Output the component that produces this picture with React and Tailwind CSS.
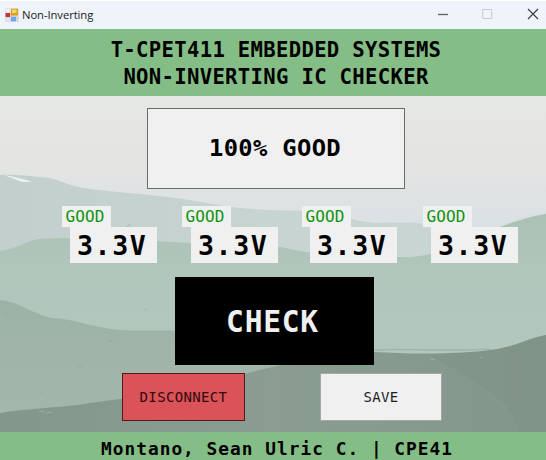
import React from "react";

const MONO = "font-['DejaVu_Sans_Mono',monospace] whitespace-nowrap";

function AppIcon() {
  return (
    <svg width="14" height="14" viewBox="0 0 14 14" className="shrink-0">
      <rect x="0.3" y="0.3" width="13.4" height="13.4" fill="#d3d6dc" />
      <rect x="0.8" y="0.8" width="4.6" height="3.8" fill="#f0f1f4" />
      <rect x="0.5" y="5" width="4.6" height="4" fill="#c9343a" />
      <rect x="1" y="10" width="4" height="3.2" fill="#e2e4e9" />
      <rect x="6" y="8.8" width="5" height="4.5" fill="#6fa3ee" />
      <rect x="6" y="0.8" width="7" height="6.8" rx="0.5" fill="#dca11a" />
      <rect x="7" y="1.6" width="4.5" height="3.4" fill="#fbd65c" />
    </svg>
  );
}

function Landscape() {
  return (
    <svg
      className="absolute inset-0 h-full w-full"
      viewBox="0 96 546 336"
      preserveAspectRatio="none"
    >
      <defs>
        <linearGradient id="sky" x1="0" y1="0" x2="0" y2="1">
          <stop offset="0" stopColor="#e6e8e4" />
          <stop offset="0.2" stopColor="#e4e4e3" />
          <stop offset="0.38" stopColor="#dae1e4" />
        </linearGradient>
        <linearGradient id="far" x1="0" y1="0" x2="1" y2="0">
          <stop offset="0" stopColor="#c2cfcd" />
          <stop offset="0.5" stopColor="#c8d4d2" />
          <stop offset="1" stopColor="#cad6d3" />
        </linearGradient>
        <linearGradient id="mid" gradientUnits="userSpaceOnUse" x1="0" y1="214" x2="0" y2="350">
          <stop offset="0" stopColor="#abc1b4" />
          <stop offset="0.4" stopColor="#b0c6bb" />
          <stop offset="1" stopColor="#b2c8be" />
        </linearGradient>
        <linearGradient id="near" x1="0" y1="0" x2="0" y2="1">
          <stop offset="0" stopColor="#9db2a6" />
          <stop offset="1" stopColor="#a5b7ac" />
        </linearGradient>
        <linearGradient id="front" x1="0" y1="0" x2="1" y2="0">
          <stop offset="0" stopColor="#84978c" />
          <stop offset="0.5" stopColor="#8b9d93" />
          <stop offset="1" stopColor="#83968a" />
        </linearGradient>
      </defs>
      <rect x="0" y="96" width="546" height="336" fill="url(#sky)" />
      <path
        d="M0 175C16 174 36 177 50 178C62 181 72 187 90 189C120 193 150 194 175 198C200 201 220 206 240 208C270 211 290 210 312 211C330 213 345 217 360 221C385 225 405 220 432 225C470 234 520 240 546 238V432H0Z"
        fill="url(#far)"
      />
      <path d="M4 175Q22 178 32 182L22 182Z" fill="#eaf0ee" />
      <path d="M350 216Q364 222 380 222" fill="none" stroke="#dde6e2" strokeWidth="1.2" />
      <path
        d="M0 251C16 249 25 242 38 239C52 238 70 238 90 239C130 239 155 241 190 243C240 243 270 244 290 249C310 254 350 257 410 257C440 255 470 242 502 226C515 222 530 216 546 214V432H0Z"
        fill="url(#mid)"
      />
      <path d="M498 227Q522 216 546 213" fill="none" stroke="#d5dfda" strokeWidth="1" />
      <path
        d="M0 300C20 302 30 313 52 318C75 319 90 327 120 330C145 331 165 330 185 331C240 334 300 348 374 349V432H0Z"
        fill="url(#near)"
      />
      <path
        d="M0 413C30 408 60 408 90 403C150 396 205 383 245 374C285 363 330 353 374 352C410 354 455 355 498 349C515 346 530 338 546 335V432H0Z"
        fill="url(#front)"
      />
      <path
        d="M374 350C410 348 440 352 490 349"
        fill="none"
        stroke="#a0b5aa"
        strokeWidth="1.5"
      />
      <path
        d="M430 356C455 368 490 390 505 404C514 414 516 424 520 432H546V335C530 338 515 346 498 349C475 353 450 354 430 356Z"
        fill="#7d9184"
        opacity="0.5"
      />
      <g fill="none" stroke="#8fa69a" strokeWidth="1" opacity="0.7">
        <path d="M108 342l5-2M77 365l5 3M4 316l4-2M39 391l3 2M145 309l2 1M126 228l4-4" />
      </g>
      <g fill="none" stroke="#a5b5ab" strokeWidth="1" opacity="0.7">
        <path d="M39 411l6 1M47 413l5-1M430 359l5 1M480 357l3 1" />
      </g>
    </svg>
  );
}

function Good({ className }) {
  return (
    <div
      className={`${MONO} ${className} h-[21px] w-[49px] shrink-0 bg-[#f0f0f0] pl-[3.5px] text-[16px] leading-[22px] tracking-[0.1px] text-[#0f930f]`}
    >
      GOOD
    </div>
  );
}

function Voltage({ className }) {
  return (
    <div
      className={`${MONO} ${className} h-[36px] w-[87px] shrink-0 bg-[#f0f0f0] pl-[7px] text-[26.6px] leading-[38px] font-bold tracking-[1.6px] text-black`}
    >
      3.3V
    </div>
  );
}

export default function App() {
  return (
    <div className="flex h-[460px] w-[546px] flex-col overflow-hidden bg-[#85bd87]">
      <div className="flex h-[29px] shrink-0 items-center border-t border-white bg-[#eff3fa] pl-[5px]">
        <AppIcon />
        <span className="ml-[3px] font-['Open_Sans','Noto_Sans',sans-serif] text-[11.3px] leading-[16px] tracking-[-0.1px] text-[#1b1b1d]">
          Non-Inverting
        </span>
        <svg width="110" height="20" viewBox="436 5 110 20" className="ml-auto" fill="none">
          <path d="M438 14.5H448" stroke="#606266" strokeWidth="1.3" />
          <rect x="482.7" y="9.5" width="9" height="9" rx="0.5" stroke="#c6c9cf" />
          <path d="M528 9L538 19M538 9L528 19" stroke="#3d3e41" strokeWidth="1.2" />
        </svg>
      </div>

      <header
        className={`${MONO} h-[67px] shrink-0 pt-[8px] pl-[6px] text-center text-[20.6px] leading-[27px] font-bold tracking-[0.32px] text-black`}
      >
        <div>T-CPET411 EMBEDDED SYSTEMS</div>
        <div>NON-INVERTING IC CHECKER</div>
      </header>

      <main className="relative h-[336px] shrink-0">
        <Landscape />
        <div className="relative flex h-full flex-col">
          <div
            className={`${MONO} mt-[12px] ml-[147px] flex h-[81px] w-[258px] items-center justify-center border border-[#6c6c6c] bg-[#f0f0f0] pr-[2px] text-[23.8px] font-bold tracking-[0.35px] text-black`}
          >
            100% GOOD
          </div>
          <div className="mt-[17px] flex">
            <Good className="ml-[62px]" />
            <Good className="ml-[71px]" />
            <Good className="ml-[71px]" />
            <Good className="ml-[72px]" />
          </div>
          <div className="flex">
            <Voltage className="ml-[70px]" />
            <Voltage className="ml-[34px]" />
            <Voltage className="ml-[32px]" />
            <Voltage className="ml-[34px]" />
          </div>
          <button
            className={`${MONO} mt-[14px] ml-[175px] h-[88px] w-[199px] shrink-0 bg-black pt-[2px] pr-[4px] text-[29.6px] font-bold tracking-[0.75px] text-[#f0f0f0]`}
          >
            CHECK
          </button>
          <div className="mt-[8px] flex items-center">
            <button
              className={`${MONO} ml-[122px] h-[48px] w-[123px] border border-[#55191d] bg-[#da5358] text-[14px] tracking-[0.35px] text-[#30090c]`}
            >
              DISCONNECT
            </button>
            <button
              className={`${MONO} ml-[75px] h-[48px] w-[122px] border border-[#a3aaa6] bg-[#f0f0f0] text-[14px] tracking-[0.35px] text-[#1c1c1c]`}
            >
              SAVE
            </button>
          </div>
        </div>
      </main>

      <footer
        className={`${MONO} h-[28px] shrink-0 pt-[3px] pl-[8px] text-center text-[17.8px] leading-[28px] font-bold tracking-[1.03px] text-black`}
      >
        Montano, Sean Ulric C. | CPE41
      </footer>
    </div>
  );
}
